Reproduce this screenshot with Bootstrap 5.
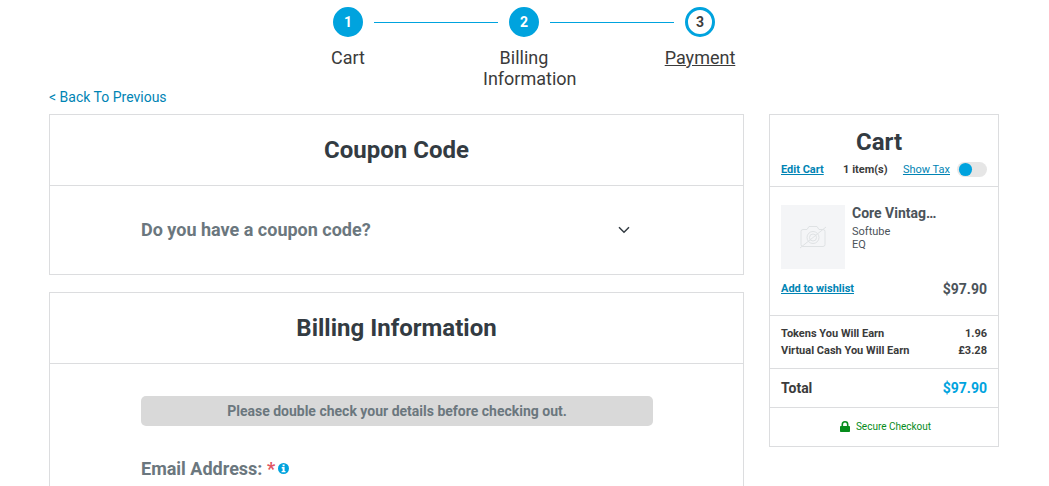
<!DOCTYPE html>
<html lang="en">
<head>
<meta charset="utf-8">
<meta name="viewport" content="width=device-width, initial-scale=1">
<title>Checkout - Payment</title>
<link href="https://cdn.jsdelivr.net/npm/bootstrap@5.3.0/dist/css/bootstrap.min.css" rel="stylesheet">
<style>
body{font-family:Roboto,"Liberation Sans",sans-serif;color:#3b3b3b;font-size:14px;line-height:18px;overflow-x:hidden}
a{color:#0084b4}
.page{padding:7px 50px 0 49px}
.steps{height:81px}
.step{width:82px;font-size:18px;line-height:21px;text-align:center}
.step a{color:inherit}
.dot{width:30px;height:30px;border:3px solid #00a3de;background:#00a3de;color:#fff;font-size:14px;font-weight:700;margin-bottom:10px}
.dot.current{background:#fff;color:#3b3b3b}
.rail{width:124px;margin:15px -15px 0;height:1px;background:#00a3de}
.columns{gap:25px}
.panels{gap:17px}
.sidebar{width:230px}
.box{border:1px solid #dcdddf}
.rule{border-bottom:1px solid #dcdddf}
.head{font-size:24px;line-height:28px;font-weight:700;color:#333b42;margin:0}
.panel-head{padding:21px 16px}
.panel-inner{padding:0 90px 0 91px}
.question{font-size:18px;line-height:22px;font-weight:700;color:#6b777e}
.coupon-toggle{padding:33px 22px 33px 0;background:none;border:0}
.notice{background:#d9d9d9;color:#6b777e;font-weight:700;border-radius:5px;padding:6px;margin:32px 0}
.required{color:#e05563}
.info{margin:0 0 2px 3px}
.side-pad{padding-left:11px;padding-right:11px}
.cart-head{padding-top:13px;padding-bottom:9px}
.cart-head .head{padding-right:10px;margin-bottom:6px}
.tiny{font-size:11px;line-height:14px}
.tax{gap:7px}
.tax.form-switch{padding:0;min-height:0}
.tax .form-check-input{width:30px;height:15px;margin:0;border:0;background-color:#e6e6e6;--bs-form-switch-bg:url("data:image/svg+xml,%3csvg xmlns='http://www.w3.org/2000/svg' viewBox='-8 -8 16 16'%3e%3ccircle r='7' fill='%2300a3de'/%3e%3c/svg%3e")}
.tax .form-check-input:not(:checked){background-image:var(--bs-form-switch-bg);background-position:1px center}
.product{color:#4b535a;padding-top:18px;padding-bottom:17px}
.product-row{gap:7px;margin-bottom:11px}
.thumb{width:64px;height:64px;background:#f4f5f7}
.product-name{line-height:16px;margin-bottom:4px}
.product-meta{font-size:11px;line-height:13px}
.earn{line-height:17px;padding-top:9px;padding-bottom:9px}
.total{padding-top:10px;padding-bottom:10px}
.accent{color:#00a3de}
.secure{color:#068c1c;font-size:10px;line-height:14px;padding:12px 0 12px 3px;gap:6px}
</style>
</head>
<body>
<div class="page">
  <nav class="steps d-flex justify-content-center align-items-start" aria-label="Checkout progress">
    <div class="step"><span class="dot rounded-circle d-flex align-items-center justify-content-center mx-auto">1</span><a class="text-decoration-none" href="#">Cart</a></div>
    <div class="rail"></div>
    <div class="step"><span class="dot rounded-circle d-flex align-items-center justify-content-center mx-auto">2</span><a class="text-decoration-none" href="#">Billing Information</a></div>
    <div class="rail"></div>
    <div class="step"><span class="dot current rounded-circle d-flex align-items-center justify-content-center mx-auto">3</span><a href="#" aria-current="step">Payment</a></div>
  </nav>
  <a class="text-decoration-none d-inline-block mb-2" href="#">&lt; Back To Previous</a>
  <div class="columns d-flex align-items-start">
    <main class="panels flex-grow-1 d-flex flex-column">
      <section class="box">
        <div class="panel-head rule"><h2 class="head text-center">Coupon Code</h2></div>
        <div class="panel-inner">
          <button type="button" class="coupon-toggle question w-100 d-flex justify-content-between align-items-center" aria-expanded="false">
            <span>Do you have a coupon code?</span>
            <svg width="14" height="10" viewBox="0 0 14 10" fill="none" stroke="#333b42" stroke-width="1.5" aria-hidden="true"><path d="M2 2.2l5 5 5-5"/></svg>
          </button>
        </div>
      </section>
      <section class="box">
        <div class="panel-head rule"><h2 class="head text-center">Billing Information</h2></div>
        <div class="panel-inner pb-4">
          <p class="notice text-center">Please double check your details before checking out.</p>
          <label class="question d-flex align-items-center mb-2" for="email"><span>Email Address: <span class="required">*</span></span>
            <svg class="info" width="11" height="11" viewBox="0 0 11 11" aria-hidden="true"><circle cx="5.5" cy="5.5" r="5.5" fill="#00a3de"/><path fill="#fff" d="M4.600 1.600h2v1.600h-2zM3.700 4.100h2.900v3.800h.9v1.300H3.600V7.900h1V5.400h-.9z"/></svg>
          </label>
          <input class="form-control" id="email" type="email">
        </div>
      </section>
    </main>
    <aside class="sidebar box flex-shrink-0">
      <div class="cart-head side-pad rule">
        <h2 class="head text-center">Cart</h2>
        <div class="tiny d-flex justify-content-between align-items-center">
          <a class="fw-bold" href="#">Edit Cart</a><span class="fw-bold ms-1">1 item(s)</span>
          <div class="tax form-check form-switch d-flex align-items-center mb-0"><label for="tax"><a href="#">Show Tax</a></label><input class="form-check-input" type="checkbox" role="switch" id="tax"></div>
        </div>
      </div>
      <div class="side-pad rule product">
        <div class="product-row d-flex">
          <div class="thumb d-flex align-items-center justify-content-center">
            <svg width="28" height="24" viewBox="0 0 28 24" fill="none" stroke="#dfe2e4" stroke-width="1" aria-hidden="true"><path d="M4 4.500h4l2-3h8l2 3h4q2 0 2 2v13q0 2-2 2H4q-2 0-2-2v-13q0-2 2-2zM1 23L27 2"/><circle cx="14" cy="12.500" r="6"/><circle cx="14" cy="12.500" r="3.500"/></svg>
          </div>
          <div><div class="product-name fw-bold">Core Vintag…</div><div class="product-meta">Softube<br>EQ</div></div>
        </div>
        <div class="d-flex justify-content-between align-items-center"><a class="tiny fw-bold" href="#">Add to wishlist</a><span class="fw-bold">$97.90</span></div>
      </div>
      <div class="side-pad rule tiny earn fw-bold">
        <div class="d-flex justify-content-between"><span>Tokens You Will Earn</span><span>1.96</span></div>
        <div class="d-flex justify-content-between"><span>Virtual Cash You Will Earn</span><span>£3.28</span></div>
      </div>
      <div class="total side-pad rule fw-bold d-flex justify-content-between"><span>Total</span><span class="accent">$97.90</span></div>
      <div class="secure d-flex justify-content-center align-items-center">
        <svg width="10" height="12" viewBox="0 0 10 12" aria-hidden="true"><path fill="none" stroke="#068c1c" stroke-width="1.600" d="M2.300 6V3.500a2.700 2.700 0 015.400 0V6"/><rect y="5" width="10" height="6" rx=".8" fill="#068c1c"/></svg>
        <span>Secure Checkout</span>
      </div>
    </aside>
  </div>
</div>
<script src="https://cdn.jsdelivr.net/npm/bootstrap@5.3.0/dist/js/bootstrap.bundle.min.js"></script>
</body>
</html>
